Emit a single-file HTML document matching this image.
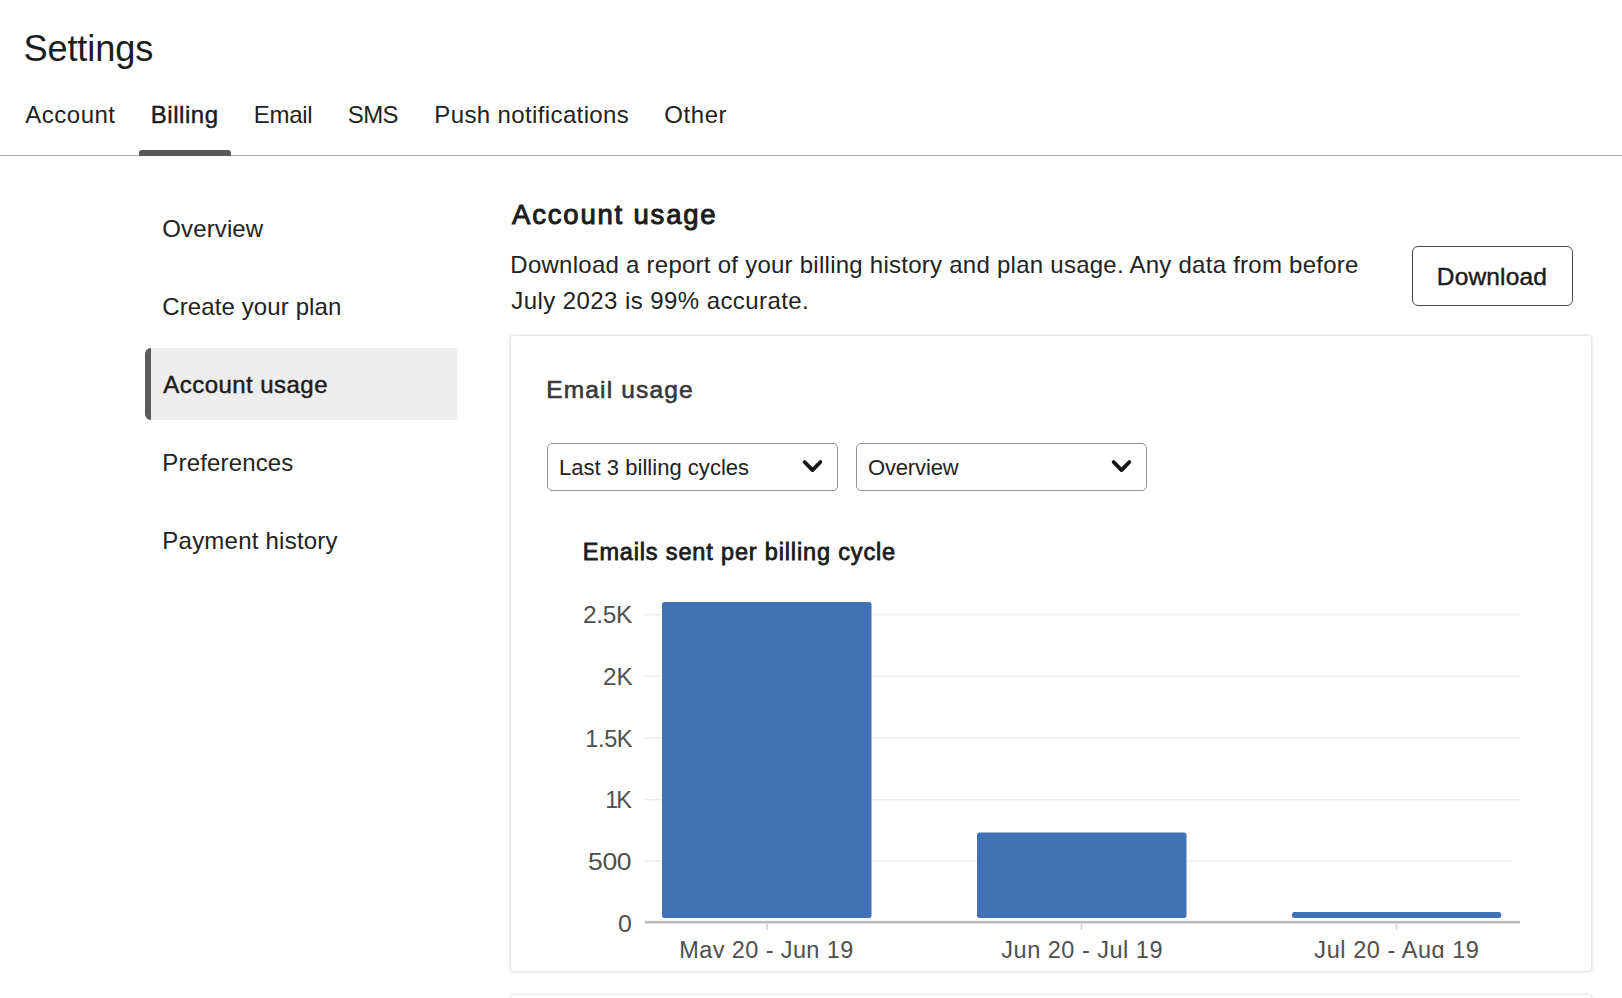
<!DOCTYPE html>
<html><head><meta charset="utf-8"><title>Settings</title><style>
*{margin:0;padding:0;box-sizing:border-box}
html,body{width:1622px;height:998px;overflow:hidden;background:#fff}
body{position:relative;font-family:"Liberation Sans", sans-serif}
.t{position:absolute;white-space:nowrap;display:block}
.abs{position:absolute}
</style></head><body>
<div class="abs" style="left:0;top:155px;width:1622px;height:1px;background:#adadad"></div>
<div class="abs" style="left:139px;top:150px;width:92px;height:6px;background:#595959;border-radius:3px 3px 0 0"></div>
<div class="abs" style="left:145px;top:348px;width:311.5px;height:71.5px;background:#ededed;border-radius:6px 3px 3px 6px;overflow:hidden"><div style="width:6px;height:100%;background:#5a5a5a"></div></div>
<div class="abs" style="left:1412px;top:246px;width:161px;height:60px;border:1px solid #4a4a4a;border-radius:6px;background:#fff"></div>
<div class="abs" style="left:511px;top:336px;width:1080px;height:634.5px;background:#fff;border-radius:3px;box-shadow:0 0 2.5px 0.5px rgba(0,0,0,0.11),0 1px 7px rgba(0,0,0,0.06)"></div>
<div class="abs" style="left:511px;top:995px;width:1080px;height:100px;background:#fff;border-radius:3px;box-shadow:0 0 2.5px 0.5px rgba(0,0,0,0.11),0 1px 7px rgba(0,0,0,0.06)"></div>
<div class="abs" style="left:547px;top:443px;width:291px;height:48px;border:1px solid #909090;border-radius:5px;background:#fff"></div>
<div class="abs" style="left:856px;top:443px;width:291px;height:48px;border:1px solid #909090;border-radius:5px;background:#fff"></div>
<svg class="abs" style="left:790px;top:450px" width="360" height="32" viewBox="790 450 360 32"><g fill="none" stroke="#161616" stroke-width="3.8" stroke-linecap="round" stroke-linejoin="round"><path d="M804.6 462 L812.5 470.1 L820.4 462"/><path d="M1113.6 462 L1121.5 470.1 L1129.4 462"/></g></svg>
<svg class="abs" style="left:540px;top:590px" width="1000" height="368" viewBox="540 590 1000 368">
<rect x="645" y="614.05" width="875" height="1.5" fill="#eeeeee"/>
<rect x="645" y="675.55" width="875" height="1.5" fill="#eeeeee"/>
<rect x="645" y="737.15" width="875" height="1.5" fill="#eeeeee"/>
<rect x="645" y="798.85" width="875" height="1.5" fill="#eeeeee"/>
<rect x="645" y="860.55" width="867" height="1.5" fill="#eeeeee"/>
<rect x="645" y="920.9" width="875" height="2.6" fill="#b9b9b9"/>
<rect x="766.1" y="923.5" width="1.8" height="6.5" fill="#d9d9d9"/>
<rect x="1080.6" y="923.5" width="1.8" height="6.5" fill="#d9d9d9"/>
<rect x="1395.6" y="923.5" width="1.8" height="6.5" fill="#d9d9d9"/>
<rect x="662" y="602" width="209.5" height="316" rx="2.5" fill="#4172b5"/>
<rect x="977" y="832.5" width="209.5" height="85.5" rx="2.5" fill="#4172b5"/>
<rect x="1292" y="912" width="209.2" height="6" rx="2.5" fill="#4172b5"/>
</svg>
<span id="settings" class="t" style="left:23.47px;top:29.00px;font-size:36.2px;line-height:40.435px;font-weight:400;color:#1c1c1c;letter-spacing:-0.143px">Settings</span>
<span id="tab1" class="t" style="left:25.32px;top:102.00px;font-size:24px;line-height:26.808px;font-weight:400;color:#222;letter-spacing:0.500px">Account</span>
<span id="tab2" class="t" style="left:150.82px;top:102.00px;font-size:24px;line-height:26.808px;font-weight:400;color:#1c1c1c;-webkit-text-stroke:0.45px #1c1c1c;letter-spacing:0.533px">Billing</span>
<span id="tab3" class="t" style="left:253.82px;top:102.00px;font-size:24px;line-height:26.808px;font-weight:400;color:#222;letter-spacing:-0.300px">Email</span>
<span id="tab4" class="t" style="left:347.82px;top:102.00px;font-size:24px;line-height:26.808px;font-weight:400;color:#222;letter-spacing:-0.600px">SMS</span>
<span id="tab5" class="t" style="left:434.32px;top:102.00px;font-size:24px;line-height:26.808px;font-weight:400;color:#222;letter-spacing:0.376px">Push notifications</span>
<span id="tab6" class="t" style="left:664.32px;top:102.00px;font-size:24px;line-height:26.808px;font-weight:400;color:#222;letter-spacing:0.550px">Other</span>
<span id="sb1" class="t" style="left:162.32px;top:216.00px;font-size:24px;line-height:26.808px;font-weight:400;color:#222;letter-spacing:0.114px">Overview</span>
<span id="sb2" class="t" style="left:162.32px;top:294.00px;font-size:24px;line-height:26.808px;font-weight:400;color:#222;letter-spacing:0.107px">Create your plan</span>
<span id="sb3" class="t" style="left:163.32px;top:372.00px;font-size:24px;line-height:26.808px;font-weight:400;color:#1c1c1c;-webkit-text-stroke:0.45px #1c1c1c;letter-spacing:0.450px">Account usage</span>
<span id="sb4" class="t" style="left:162.32px;top:450.00px;font-size:24px;line-height:26.808px;font-weight:400;color:#222;letter-spacing:0.160px">Preferences</span>
<span id="sb5" class="t" style="left:162.32px;top:528.00px;font-size:24px;line-height:26.808px;font-weight:400;color:#222;letter-spacing:0.229px">Payment history</span>
<span id="h1" class="t" style="left:512.08px;top:200.00px;font-size:27.5px;line-height:30.718px;font-weight:400;color:#1c1c1c;-webkit-text-stroke:1.0px #1c1c1c;letter-spacing:1.800px">Account usage</span>
<span id="p1" class="t" style="left:510.32px;top:252.00px;font-size:24px;line-height:26.808px;font-weight:400;color:#222;letter-spacing:0.255px">Download a report of your billing history and plan usage. Any data from before</span>
<span id="p2" class="t" style="left:511.32px;top:288.00px;font-size:24px;line-height:26.808px;font-weight:400;color:#222;letter-spacing:0.424px">July 2023 is 99% accurate.</span>
<span id="dl" class="t" style="left:1436.79px;top:263.00px;font-size:24.5px;line-height:27.366px;font-weight:400;color:#1c1c1c;-webkit-text-stroke:0.45px #1c1c1c;letter-spacing:0.171px">Download</span>
<span id="eu" class="t" style="left:546.28px;top:376.00px;font-size:24.5px;line-height:27.366px;font-weight:400;color:#383838;-webkit-text-stroke:0.6px #383838;letter-spacing:1.160px">Email usage</span>
<span id="s1" class="t" style="left:558.96px;top:456.00px;font-size:22px;line-height:24.574px;font-weight:400;color:#222;letter-spacing:0.030px">Last 3 billing cycles</span>
<span id="s2" class="t" style="left:867.96px;top:456.00px;font-size:22px;line-height:24.574px;font-weight:400;color:#222;letter-spacing:-0.143px">Overview</span>
<span id="ct" class="t" style="left:582.86px;top:539.00px;font-size:23.5px;line-height:26.25px;font-weight:400;color:#1c1c1c;-webkit-text-stroke:0.8px #1c1c1c;letter-spacing:0.843px">Emails sent per billing cycle</span>
<span id="y5" class="t" style="left:583.36px;top:602.00px;font-size:23.5px;line-height:26.25px;font-weight:400;color:#4f4f4f;transform:scaleX(1.04);transform-origin:0 0;letter-spacing:-0.333px">2.5K</span>
<span id="y4" class="t" style="left:603.36px;top:664.00px;font-size:23.5px;line-height:26.25px;font-weight:400;color:#4f4f4f;transform:scaleX(1.03);transform-origin:0 0;letter-spacing:0.000px">2K</span>
<span id="y3" class="t" style="left:585.36px;top:726.00px;font-size:23.5px;line-height:26.25px;font-weight:400;color:#4f4f4f;letter-spacing:-0.400px">1.5K</span>
<span id="y2" class="t" style="left:605.36px;top:787.00px;font-size:23.5px;line-height:26.25px;font-weight:400;color:#4f4f4f;letter-spacing:-2.200px">1K</span>
<span id="y1" class="t" style="left:587.86px;top:849.00px;font-size:23.5px;line-height:26.25px;font-weight:400;color:#4f4f4f;transform:scaleX(1.13);transform-origin:0 0;letter-spacing:-0.300px">500</span>
<span id="y0" class="t" style="left:617.85px;top:911.00px;font-size:23.5px;line-height:26.25px;font-weight:400;color:#4f4f4f;transform:scaleX(1.06);transform-origin:0 0;letter-spacing:0.000px">0</span>
<div class="abs" style="left:0;top:0;width:1622px;height:958px;overflow:hidden">
<span id="x1" class="t" style="left:679.35px;top:937.00px;font-size:23.5px;line-height:26.25px;font-weight:400;color:#4f4f4f;letter-spacing:0.386px">May 20 - Jun 19</span>
<span id="x2" class="t" style="left:1001.36px;top:937.00px;font-size:23.5px;line-height:26.25px;font-weight:400;color:#4f4f4f;letter-spacing:0.500px">Jun 20 - Jul 19</span>
<span id="x3" class="t" style="left:1314.36px;top:937.00px;font-size:23.5px;line-height:26.25px;font-weight:400;color:#4f4f4f;letter-spacing:0.557px">Jul 20 - Aug 19</span>
</div>
</body></html>
